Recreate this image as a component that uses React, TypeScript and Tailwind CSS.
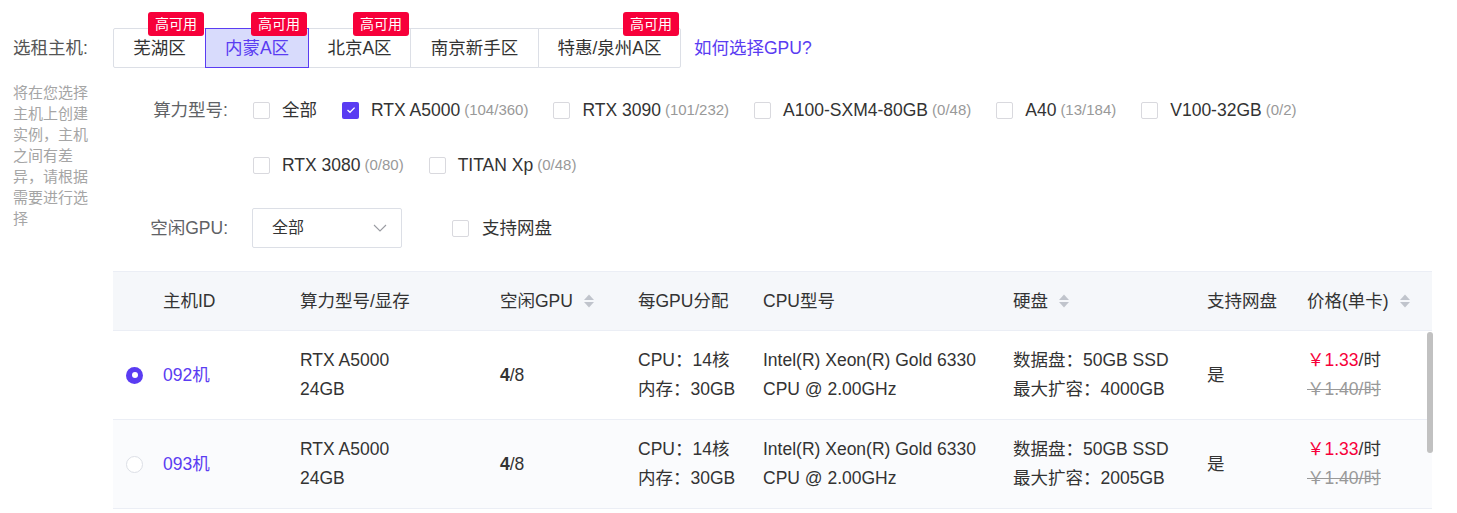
import React from "react";

const FONT = { fontFamily: '"Liberation Sans", "Noto Sans CJK SC", sans-serif' };

const regions = [
  { name: "芜湖区", hot: true, w: 93 },
  { name: "内蒙A区", hot: true, active: true, w: 104 },
  { name: "北京A区", hot: true, w: 103 },
  { name: "南京新手区", hot: false, w: 129 },
  { name: "特惠/泉州A区", hot: true, w: 143 },
];

const gpus = [
  { name: "全部", count: "" },
  { name: "RTX A5000", count: "(104/360)", checked: true },
  { name: "RTX 3090", count: "(101/232)" },
  { name: "A100-SXM4-80GB", count: "(0/48)" },
  { name: "A40", count: "(13/184)" },
  { name: "V100-32GB", count: "(0/2)" },
  { name: "RTX 3080", count: "(0/80)" },
  { name: "TITAN Xp", count: "(0/48)" },
];

const hosts = [
  { id: "092机", gpu: "RTX A5000", mem: "24GB", free: "4", total: "8", cpu: "14核", ram: "30GB", disk: "50GB SSD", max: "4000GB", selected: true },
  { id: "093机", gpu: "RTX A5000", mem: "24GB", free: "4", total: "8", cpu: "14核", ram: "30GB", disk: "50GB SSD", max: "2005GB", selected: false },
];

const cols = "grid grid-cols-[50px_137px_200px_138px_125px_250px_194px_100px_1fr]";

function Checkbox({ checked }: { checked?: boolean }) {
  if (checked) {
    return (
      <span className="w-[17px] h-[17px] rounded-[2px] bg-[#5a3cf2] flex items-center justify-center shrink-0">
        <svg width="10" height="8" viewBox="0 0 10 8" fill="none">
          <path d="M1.5 4 L4 6.3 L8.6 1.6" stroke="white" strokeWidth="1.3" />
        </svg>
      </span>
    );
  }
  return <span className="w-[17px] h-[17px] rounded-[2px] bg-white border border-[#d9d9de] shrink-0" />;
}

function SortIcon() {
  return (
    <svg width="12" height="16" viewBox="0 0 12 16" className="ml-[10px]">
      <path d="M6 1.5 L11 7 L1 7 Z" fill="#c0c4cc" />
      <path d="M6 14.5 L11 9 L1 9 Z" fill="#c0c4cc" />
    </svg>
  );
}

function Radio({ on }: { on: boolean }) {
  if (on) {
    return (
      <span className="w-[17px] h-[17px] rounded-full bg-[#5a3cf2] flex items-center justify-center">
        <span className="w-[6px] h-[6px] rounded-full bg-white" />
      </span>
    );
  }
  return <span className="w-[17px] h-[17px] rounded-full bg-white border border-[#dcdfe6]" />;
}

export default function App() {
  return (
    <div className="w-[1457px] h-[513px] bg-white text-[#333] text-[17.5px] overflow-hidden flex" style={FONT}>
      {/* left side */}
      <div className="w-[113px] pl-[13px] pt-[28px] shrink-0">
        <div className="h-10 flex items-center text-[#555]">选租主机:</div>
        <p className="mt-[14px] w-[76px] text-[15px] leading-[21px] text-[#a5a5a5]">
          将在您选择主机上创建实例，主机之间有差异，请根据需要进行选择
        </p>
      </div>

      {/* right side */}
      <div className="flex-1 pr-[25px] pt-[28px]">
        {/* regions */}
        <div className="flex items-center">
          <div className="flex">
            {regions.map((r, i) => (
              <div
                key={r.name}
                className={
                  "relative h-10 flex items-center justify-center border " +
                  (i > 0 ? "-ml-px " : "") +
                  (r.active
                    ? "z-10 bg-[#d8dbfc] border-[#5a3cf2] text-[#5a3cf2]"
                    : "bg-white border-[#dcdfe6] text-[#333]") +
                  (i === 0 ? " rounded-l-[2px]" : "") +
                  (i === regions.length - 1 ? " rounded-r-[2px]" : "")
                }
                style={{ width: r.w }}
              >
                {r.name}
                {r.hot && (
                  <span className="absolute -top-[17px] right-[1px] h-6 w-[56px] rounded-[3px] bg-[#f7003a] text-white text-[14px] flex items-center justify-center">
                    高可用
                  </span>
                )}
              </div>
            ))}
          </div>
          <a className="ml-[13px] text-[#5a3cf2]">如何选择GPU?</a>
        </div>

        {/* gpu type */}
        <div className="flex mt-[30px]">
          <div className="w-[115px] shrink-0 h-6 flex items-center justify-end text-[#606266]">算力型号:</div>
          <div className="ml-[25px] flex flex-wrap gap-y-[31px]">
            {gpus.map((g) => (
              <div key={g.name} className="h-6 flex items-center mr-[25px]">
                <Checkbox checked={g.checked} />
                <span className="ml-3 text-[#333]">{g.name}</span>
                {g.count && <span className="ml-1 text-[15px] text-[#999]">{g.count}</span>}
              </div>
            ))}
          </div>
        </div>

        {/* free gpu */}
        <div className="flex items-center mt-[31px]">
          <div className="w-[115px] shrink-0 flex justify-end text-[#606266]">空闲GPU:</div>
          <div className="ml-[24px] w-[150px] h-10 border border-[#dcdfe6] rounded-[2px] flex items-center justify-between pl-[19px] pr-[14px]">
            <span className="text-[16px] text-[#333]">全部</span>
            <svg width="14" height="8" viewBox="0 0 14 8" fill="none">
              <path d="M1 1 L7 7 L13 1" stroke="#9a9ca2" strokeWidth="1.1" />
            </svg>
          </div>
          <div className="ml-[50px] flex items-center">
            <Checkbox />
            <span className="ml-[13px] text-[#333]">支持网盘</span>
          </div>
        </div>

        {/* table */}
        <div className="mt-[23px] relative">
          <div className={cols + " h-[60px] items-center bg-[#f5f7fa] border-t border-b border-[#ebeef5] text-[#333]"}>
            <div />
            <div>主机ID</div>
            <div>算力型号/显存</div>
            <div className="flex items-center">空闲GPU<SortIcon /></div>
            <div>每GPU分配</div>
            <div>CPU型号</div>
            <div className="flex items-center">硬盘<SortIcon /></div>
            <div>支持网盘</div>
            <div className="flex items-center">价格(单卡)<SortIcon /></div>
          </div>
          {hosts.map((h, i) => (
            <div
              key={h.id}
              className={cols + " h-[89px] items-center border-b border-[#ebeef5] leading-[29px] text-[#333] " + (i % 2 ? "bg-[#fafbfd]" : "bg-white")}
            >
              <div className="pl-[13px] flex items-center">
                <Radio on={h.selected} />
              </div>
              <div className="text-[#5a3cf2]">{h.id}</div>
              <div>
                <div>{h.gpu}</div>
                <div>{h.mem}</div>
              </div>
              <div>
                <span className="font-bold">{h.free}</span>/{h.total}
              </div>
              <div>
                <div>CPU：{h.cpu}</div>
                <div>内存：{h.ram}</div>
              </div>
              <div>
                <div>Intel(R) Xeon(R) Gold 6330</div>
                <div>CPU @ 2.00GHz</div>
              </div>
              <div>
                <div>数据盘：{h.disk}</div>
                <div>最大扩容：{h.max}</div>
              </div>
              <div>是</div>
              <div>
                <div>
                  <span className="text-[#f7003a]">￥1.33</span>/时
                </div>
                <div className="text-[#999] line-through">￥1.40/时</div>
              </div>
            </div>
          ))}
          {/* scrollbar thumb */}
          <div className="absolute right-[-1px] top-[61px] w-[6px] h-[121px] rounded-full bg-[#c1c1c1]" />
        </div>
      </div>
    </div>
  );
}
